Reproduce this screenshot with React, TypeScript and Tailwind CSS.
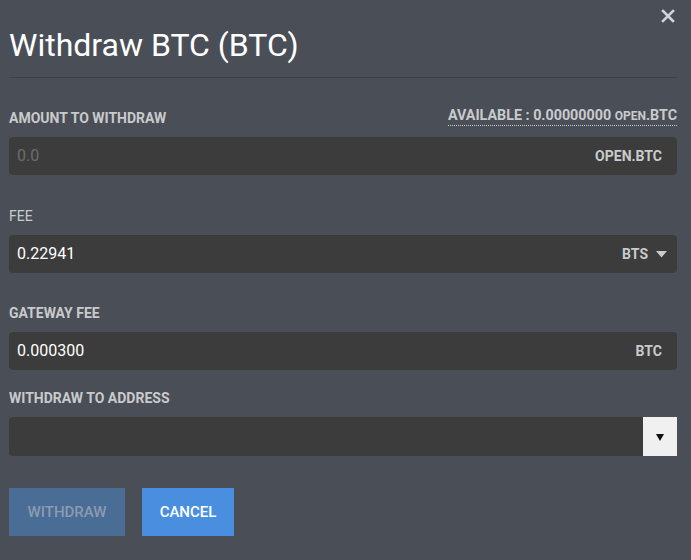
import React from "react";

export default function App() {
  return (
    <div
      className="w-[691px] h-[560px] bg-[#4a4f57] relative overflow-hidden"
      style={{ fontFamily: "Roboto, 'Liberation Sans', sans-serif" }}
    >
      <button className="absolute right-[16px] top-[9px] text-[#d0d2d5]">
        <svg width="14" height="14" viewBox="0 0 14 14">
          <path d="M2 2 L12 12 M12 2 L2 12" stroke="currentColor" strokeWidth="2.6" strokeLinecap="square" />
        </svg>
      </button>
      <div className="px-[9px] pr-[14px]">
        <div className="pt-[26px] pb-[13px] border-b border-[#3d4148]">
          <h1 className="text-[32px] leading-[38px] text-white font-normal">Withdraw BTC (BTC)</h1>
        </div>

        <div className="mt-[29px] flex justify-between items-end text-[14px] font-bold text-[#c9cacc] leading-[16px]">
          <span>AMOUNT TO WITHDRAW</span>
          <span className="border-b border-dotted border-[#c9cacc] pb-[1px] text-[14.3px]">
            AVAILABLE : 0.00000000 <span className="text-[12px]">OPEN</span>.BTC
          </span>
        </div>
        <div className="mt-[11px] h-[38px] rounded-[4px] bg-[#3c3c3c] flex items-center justify-between pl-[8px] pr-[15px]">
          <span className="text-[16px] text-[#6c6c6c]">0.0</span>
          <span className="text-[14px] font-bold text-[#c9cacc]">OPEN.BTC</span>
        </div>

        <div className="mt-[33px] text-[14px] font-normal text-[#c9cacc] leading-[16px]">FEE</div>
        <div className="mt-[11px] h-[38px] rounded-[4px] bg-[#3c3c3c] flex items-center justify-between pl-[8px] pr-[10px]">
          <span className="text-[16px] text-white">0.22941</span>
          <span className="flex items-center gap-[8px] text-[14px] font-bold text-[#c9cacc]">
            BTS
            <svg width="11" height="7" viewBox="0 0 11 7">
              <path d="M0 0 H11 L5.5 6.5 Z" fill="#c9cacc" />
            </svg>
          </span>
        </div>

        <div className="mt-[32px] text-[14px] font-bold text-[#c9cacc] leading-[16px]">GATEWAY FEE</div>
        <div className="mt-[11px] h-[38px] rounded-[4px] bg-[#3c3c3c] flex items-center justify-between pl-[8px] pr-[15px]">
          <span className="text-[16px] text-white">0.000300</span>
          <span className="text-[14px] font-bold text-[#c9cacc]">BTC</span>
        </div>

        <div className="mt-[20px] text-[14px] font-bold text-[#c9cacc] leading-[16px]">WITHDRAW TO ADDRESS</div>
        <div className="mt-[11px] h-[39px] rounded-l-[4px] bg-[#3c3c3c] flex justify-end">
          <div className="w-[34px] h-full bg-[#f0f0f0] flex items-center justify-center">
            <svg width="8" height="8" viewBox="0 0 8 8">
              <path d="M0 1 H8 L4 8 Z" fill="#111" />
            </svg>
          </div>
        </div>

        <div className="mt-[32px] flex gap-[17px]">
          <button className="w-[116px] h-[48px] bg-[#4a6d96] text-[#8b9bb0] text-[15px] font-medium">
            WITHDRAW
          </button>
          <button className="w-[92px] h-[48px] bg-[#4a8fdf] text-white text-[15px] font-medium">
            CANCEL
          </button>
        </div>
      </div>
    </div>
  );
}
